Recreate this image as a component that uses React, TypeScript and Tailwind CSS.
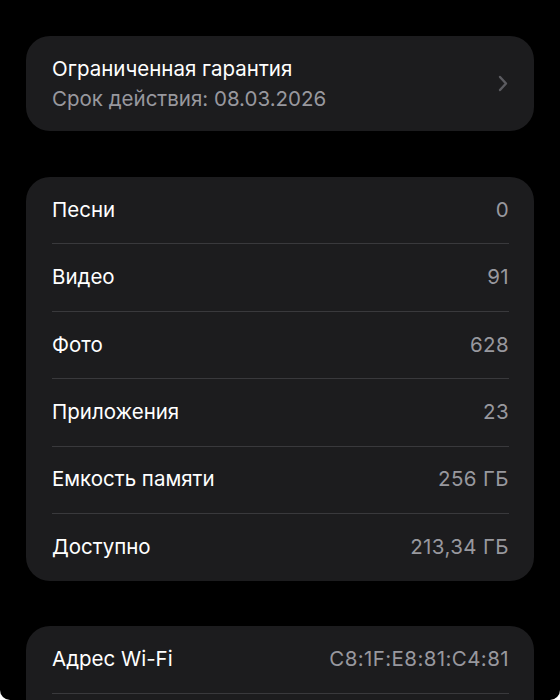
const stats = [
  { label: "Песни", value: "0" },
  { label: "Видео", value: "91" },
  { label: "Фото", value: "628" },
  { label: "Приложения", value: "23" },
  { label: "Емкость памяти", value: "256 ГБ" },
  { label: "Доступно", value: "213,34 ГБ" },
];

const Row = ({ label, value, last }: { label?: string; value?: string; last?: boolean }) => (
  <div className="pl-[26px] pr-[25px]">
    <div
      className={
        "h-[67.4px] flex items-center justify-between " +
        (last ? "" : "border-b border-[#39393c]")
      }
    >
      <span className="text-white">{label}</span>
      <span className="text-[#98989e] tracking-[0.4px]">{value}</span>
    </div>
  </div>
);

export default function App() {
  return (
    <div className="bg-white h-[700px]">
      <div
        className="h-[700px] bg-black rounded-b-[10px] overflow-hidden pt-[36px] px-[26px] text-[20.5px]"
        style={{ fontFamily: "Inter, 'Noto Sans', sans-serif" }}
      >
        <div className="h-[95px] rounded-[24px] bg-[#1c1c1e] flex items-center justify-between pl-[26px] pr-[25px]">
          <div className="leading-[30px]">
            <div className="text-white">Ограниченная гарантия</div>
            <div className="text-[#98989e]">Срок действия: 08.03.2026</div>
          </div>
          <svg width="10" height="17" viewBox="0 0 10 17" fill="none" className="mr-[1px]">
            <path d="M2 2l6 6.5L2 15" stroke="#5b5b60" strokeWidth="2.4" strokeLinecap="round" strokeLinejoin="round" />
          </svg>
        </div>

        <div className="mt-[46px] rounded-[24px] bg-[#1c1c1e]">
          {stats.map((s, i) => (
            <Row key={s.label} label={s.label} value={s.value} last={i === stats.length - 1} />
          ))}
        </div>

        <div className="mt-[45px] rounded-[24px] bg-[#1c1c1e]">
          <Row label="Адрес Wi-Fi" value="C8:1F:E8:81:C4:81" />
          <Row last />
        </div>
      </div>
    </div>
  );
}
